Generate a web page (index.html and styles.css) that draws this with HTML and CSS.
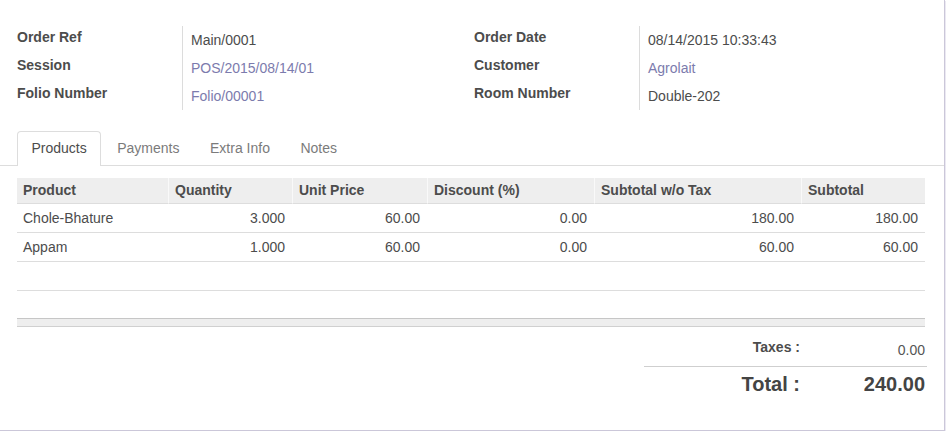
FILE: index.html
```html
<!DOCTYPE html>
<html>
<head>
<meta charset="utf-8">
<link rel="stylesheet" href="styles.css">
</head>
<body>
<div class="sheet">
  <div class="info">
    <div class="group">
      <div class="label">Order Ref</div><div class="value">Main/0001</div>
      <div class="label">Session</div><div class="value"><a class="link">POS/2015/08/14/01</a></div>
      <div class="label">Folio Number</div><div class="value"><a class="link">Folio/00001</a></div>
    </div>
    <div class="group">
      <div class="label">Order Date</div><div class="value">08/14/2015 10:33:43</div>
      <div class="label">Customer</div><div class="value"><a class="link">Agrolait</a></div>
      <div class="label">Room Number</div><div class="value">Double-202</div>
    </div>
  </div>

  <div class="tabs">
    <div class="tab active">Products</div>
    <div class="tab">Payments</div>
    <div class="tab">Extra Info</div>
    <div class="tab">Notes</div>
  </div>

  <table class="lines">
    <colgroup>
      <col class="c1"><col class="c2"><col class="c3"><col class="c4"><col class="c5"><col class="c6">
    </colgroup>
    <thead>
      <tr><th>Product</th><th>Quantity</th><th>Unit Price</th><th>Discount (%)</th><th>Subtotal w/o Tax</th><th>Subtotal</th></tr>
    </thead>
    <tbody>
      <tr><td>Chole-Bhature</td><td class="num">3.000</td><td class="num">60.00</td><td class="num">0.00</td><td class="num">180.00</td><td class="num">180.00</td></tr>
      <tr><td>Appam</td><td class="num">1.000</td><td class="num">60.00</td><td class="num">0.00</td><td class="num">60.00</td><td class="num">60.00</td></tr>
      <tr class="empty"><td></td><td></td><td></td><td></td><td></td><td></td></tr>
      <tr class="empty last"><td></td><td></td><td></td><td></td><td></td><td></td></tr>
    </tbody>
    <tfoot>
      <tr><td></td><td></td><td></td><td></td><td></td><td></td></tr>
    </tfoot>
  </table>

  <div class="totals-wrap">
    <div class="totals">
      <div class="t-label taxes">Taxes :</div><div class="t-value taxes">0.00</div>
      <div class="t-label total">Total :</div><div class="t-value total">240.00</div>
    </div>
  </div>
</div>
</body>
</html>
```
FILE: styles.css
```css
html, body {
  margin: 0;
  padding: 0;
  background: #fff;
}
body {
  font-family: "Liberation Sans", Arial, sans-serif;
  font-size: 14px;
  color: #4c4c4c;
}
.sheet {
  width: 944px;
  height: 430px;
  border-right: 1px solid #cbc7d9;
  border-bottom: 1px solid #cbc7d9;
  box-shadow: 1px 1px 0 #ebe9f2;
  background: #fff;
}
.info {
  display: grid;
  grid-template-columns: 457px 457px;
  padding: 26px 0 0 17px;
}
.group {
  display: grid;
  grid-template-columns: 166px 1fr;
  grid-auto-rows: 28px;
}
.label {
  font-weight: bold;
  line-height: 20px;
  padding-top: 1px;
  border-right: 1px solid #dcdcdc;
}
.value {
  line-height: 20px;
  padding: 4px 0 0 8px;
}
.link {
  color: #7c7bad;
  text-decoration: none;
}
.tabs {
  display: flex;
  margin-top: 21px;
  padding-left: 17px;
  border-bottom: 1px solid #ddd;
}
.tab {
  padding: 6px 13.5px 8px;
  line-height: 20px;
  border: 1px solid transparent;
  border-bottom: none;
  border-radius: 4px 4px 0 0;
  margin-right: 1.5px;
  margin-bottom: -1px;
  color: #7b7b7b;
}
.tab.active {
  border-color: #ddd;
  background: #fff;
  color: #4c4c4c;
}
.lines {
  margin: 12px 0 0 17px;
  width: 908px;
  table-layout: fixed;
  border-collapse: separate;
  border-spacing: 0;
}
.c1 { width: 151px; }
.c2 { width: 124px; }
.c3 { width: 135px; }
.c4 { width: 167px; }
.c5 { width: 207px; }
.c6 { width: 124px; }
.lines th {
  background: #eee;
  font-weight: bold;
  text-align: left;
  line-height: 20px;
  padding: 2px 6px 3px;
  border-bottom: 1px solid #ddd;
  border-left: 1px solid #f9f9f9;
  white-space: nowrap;
}
.lines th:first-child {
  border-left: none;
}
.lines td {
  line-height: 20px;
  padding: 4px 7px 4px 6px;
  border-bottom: 1px solid #ddd;
  white-space: nowrap;
}
.lines td.num {
  text-align: right;
}
.lines tr.empty td {
  height: 20px;
}
.lines tr.empty.last td {
  height: 19px;
  border-bottom: none;
}
.lines tfoot td {
  height: 7px;
  padding: 0;
  line-height: 0;
  background: #eee;
  border-top: 1px solid #c6c6c6;
  border-bottom: 1px solid #d0d0d0;
}
.totals-wrap {
  display: flex;
  justify-content: flex-end;
  padding-right: 17px;
  margin-top: 10px;
}
.totals {
  width: 283px;
  display: grid;
  grid-template-columns: 1fr 127px;
}
.t-label {
  text-align: right;
  font-weight: bold;
}
.t-value {
  text-align: right;
  padding-right: 2px;
}
.taxes {
  height: 29px;
  line-height: 20px;
  border-bottom: 1px solid #cfcfcf;
}
.t-value.taxes {
  padding-top: 3px;
  height: 26px;
  color: #555;
}
.total {
  font-size: 20px;
  font-weight: bold;
  line-height: 28px;
  padding-top: 3px;
  color: #444;
}
```
